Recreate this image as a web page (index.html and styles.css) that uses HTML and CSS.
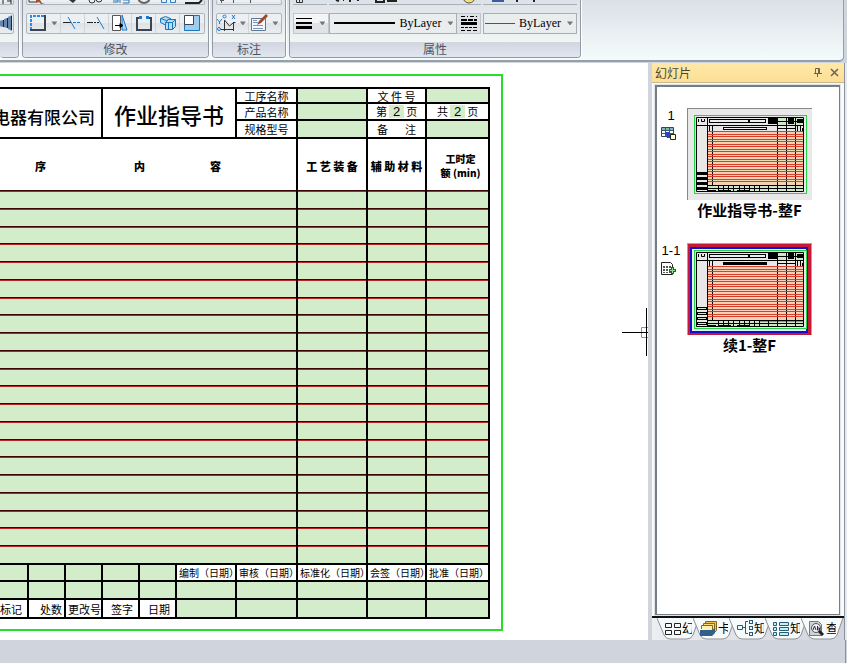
FILE: index.html
```html
<!DOCTYPE html>
<html lang="zh-CN">
<head>
<meta charset="utf-8">
<title>作业指导书</title>
<link rel="stylesheet" href="styles.css">
</head>
<body>
<div class="app">
  <header class="ribbon">
    <section class="group group-cut">
      <div class="tools tools-top"><svg width="15" height="5"><path d="M5 0v4M9 1h4M13 0v4" stroke="#222" fill="none"/></svg></div>
      <div class="tools"><button class="tool" aria-label="镜像"><svg width="13" height="16"><path d="M13 0v16L9 14V2zM8 3v10L5 12V4zM4 5v7l-4-1V6z" fill="#6886ae"/><path d="M12.500 1v14M8.500 3v10M4.500 5v7" stroke="#223" fill="none"/></svg></button></div>
      <div class="caption"></div>
    </section>
    <section class="group group-modify">
      <div class="tools tools-top"><svg width="178" height="5"><path d="M2 0v2h7" stroke="#333" fill="none"/><path d="M9 0h4l2 3h3l-4 1-2-2-3 1z" fill="#a0522d"/><path d="M42 0h7l-3 3z" fill="#333"/><circle cx="65" cy="0" r="3" fill="none" stroke="#333"/><circle cx="72" cy="-1" r="3" fill="none" stroke="#333"/><path d="M86 0h5v2h-5M93 0v3M96 0h6v3h-6" stroke="#2876b8" fill="none"/><circle cx="117" cy="-3" r="6" fill="none" stroke="#666" stroke-width="2"/><path d="M134.500 -1v3.500h5v-4M143.500 -1v3.500h5v-4" stroke="#2d7fc4" fill="none"/><path d="M158 3h14l3-3" stroke="#222" fill="none" stroke-width="2"/></svg></div>
      <div class="tools">
        <button class="tool tool-first" aria-label="拉伸"><svg width="18" height="18"><path d="M2 16V2h14" fill="none" stroke="#2f8bdb" stroke-width="2" stroke-dasharray="3 1"/><path d="M1 16h15V1" fill="none" stroke="#3b4450" stroke-width="2"/></svg></button>
        <button class="drop" aria-label="更多"></button>
        <button class="tool" aria-label="修剪"><svg width="18" height="18"><path d="M0 8.500h8" stroke="#222"/><path d="M5 3l7 12" stroke="#1c79cf"/><path d="M10 8.500h8" stroke="#1c79cf" stroke-dasharray="3 1"/></svg></button>
        <button class="tool" aria-label="延伸"><svg width="18" height="18"><path d="M0 8.500h6M7 8.500h2M10 8.500h2" stroke="#222"/><path d="M10 3l7 12" stroke="#1c79cf"/></svg></button>
        <button class="tool" aria-label="比例"><svg width="18" height="18"><path d="M1.500 1.500h8v15h-8z" fill="#fff" stroke="#555"/><path d="M11 1l5 15h-5z" fill="#a9d3f3" stroke="#1c79cf"/><path d="M4 11.500h7M9 9.500l3 2-3 2z" stroke="#000" fill="#000"/></svg></button>
        <button class="tool" aria-label="打断"><svg width="18" height="18"><path d="M4 4H2v12h14V4h-2" fill="none" stroke="#3b4450" stroke-width="2"/><path d="M4 2h3v3H4zM11 2h3v3h-3z" fill="#187bd1"/></svg></button>
        <button class="tool" aria-label="三维"><svg width="18" height="18" fill="#b8ddf6" stroke="#1976ba"><path d="M1.500 4.500l5-2 5 2v5l-4 2-6-3z"/><path d="M1.500 4.500l6 2 4-2" fill="none"/><path d="M6.500 8.500l3-3h7v7l-3 3h-7z"/><path d="M6.500 8.500h7l3-3M13.500 8.500v7M9.500 8.500v7" fill="none"/></svg></button>
        <button class="tool" aria-label="缩放"><svg width="18" height="18"><path d="M1.500 16.500h15v-15h-6v9h-9z" fill="#9fcdf0" stroke="#1976ba"/><path d="M1.500 1.500h9v9h-9z" fill="#fff" stroke="#3b4450"/></svg></button>
      </div>
      <div class="caption">修改</div>
    </section>
    <section class="group group-mark">
      <div class="tools tools-top"><svg width="64" height="5"><path d="M4.500 0v3M16.500 0v3M3 .5h4M33.500 0v3" stroke="#555" fill="none"/></svg></div>
      <div class="tools">
        <button class="tool tool-first" aria-label="坐标标注"><svg width="20" height="18"><path d="M4 15.500h13M7.500 17V6l5 6 4-3.500h2M16.500 8v9" fill="none" stroke="#333"/><path d="M0 5l2.500 3L5 5M2.500 8v2M15 1l3 4M18 1l-3 4" stroke="#1c79cf" fill="none"/><circle cx="7.500" cy="2.500" r="1.500" fill="none" stroke="#1c79cf"/><circle cx="2" cy="15" r="1.500" fill="none" stroke="#1c79cf"/></svg></button>
        <button class="drop" aria-label="更多标注"></button>
        <button class="tool tool-first" aria-label="编辑标注"><svg width="18" height="18"><path d="M1.500 4.500h14v12h-14z" fill="#f4f8fc" stroke="#66758a"/><path d="M3 8.500h5M3 11.500h10M3 14.500h10M3 6.500h4" stroke="#6f96c4"/><path d="M16 0l2 2-7 7-4 2 2-4z" fill="#9c492a"/></svg></button>
        <button class="drop" aria-label="更多编辑"></button>
      </div>
      <div class="caption">标注</div>
    </section>
    <section class="group group-props">
      <div class="props props-top"><svg width="284" height="5"><path d="M3.500 0v2.500h6V0M6.500 0v2" fill="none" stroke="#333"/><path d="M0 4.500h34M36 4.500h152" fill="none" stroke="#a7aeb5"/><path d="M43 0l3 1M50 0h1M57 0v2M64 0h2M83 0v2h8V0M94 1h10" fill="none" stroke="#222" stroke-width="2"/><circle cx="176" cy="-3" r="6" fill="#ede27c" stroke="#555"/><path d="M199 0h12v2h-12z" fill="#3b5ca5"/><path d="M224 0v2M241 0v2" stroke="#222" stroke-width="2"/><path d="M190 4.500h94" stroke="#a7aeb5"/></svg></div>
      <div class="props">
        <button class="weight" aria-label="线宽"><svg width="16" height="12"><path d="M0 1.500h16" stroke="#000"/><path d="M0 6h16" stroke="#000" stroke-width="2"/><path d="M0 10.500h16" stroke="#000" stroke-width="3"/></svg><i class="arrow"></i></button>
        <div class="combo combo-line"><i class="swatch"></i><select aria-label="线宽值"><option>ByLayer</option></select><i class="arrow"></i></div>
        <button class="linetype" aria-label="线型"><svg width="16" height="16"><path d="M0 1.500h4M6 1.500h1M9 1.500h4M15 1.500h1M0 12.500h3M4 12.500h3M8 12.500h3M12 12.500h4M0 15.500h4M6 15.500h4M12 15.500h4" stroke="#000"/><path d="M0 5h6M7 5h5M13 5h3" stroke="#000" stroke-width="2"/><path d="M0 8.500h16" stroke="#000" stroke-width="3"/></svg></button>
        <div class="combo combo-color"><i class="swatch swatch-red"></i><select aria-label="颜色"><option>ByLayer</option></select><i class="arrow"></i></div>
      </div>
      <div class="caption">属性</div>
    </section>
  </header>

  <main class="work">
    <section class="canvas">
      <div class="sheet">
        <table class="form">
          <colgroup><col class="c-a"><col class="c-b"><col class="c-b"><col class="c-b"><col class="c-b"><col class="c-g"><col class="c-h"><col class="c-e"><col class="c-c"><col class="c-f"></colgroup>
          <tbody class="head">
            <tr class="h-first"><td colspan="3" rowspan="3" class="company"><div>电器有限公司</div></td><td colspan="3" rowspan="3" class="doc-title">作业指导书</td><td>工序名称</td><td class="fill"></td><td>文 件 号</td><td class="fill"></td></tr>
            <tr class="h-17"><td>产品名称</td><td class="fill"></td><td><div class="page">第<b>2</b>页</div></td><td><div class="page">共<b>2</b>页</div></td></tr>
            <tr class="h-18"><td>规格型号</td><td class="fill"></td><td><div class="note"><span>备</span><span>注</span></div></td><td class="fill"></td></tr>
          </tbody>
          <tbody class="titles">
            <tr><th colspan="7"><div class="step"><span>序</span><span>内</span><span>容</span></div></th><th>工 艺 装 备</th><th>辅 助 材 料</th><th class="quota">工时定<br>额 (min)</th></tr>
          </tbody>
          <tbody class="lines" id="lines"></tbody>
          <tbody class="sign">
            <tr class="h-17"><td class="fill"></td><td class="fill"></td><td class="fill"></td><td class="fill"></td><td class="fill"></td><td>编制（日期）</td><td>审核（日期）</td><td>标准化（日期）</td><td>会签（日期）</td><td>批准（日期）</td></tr>
            <tr class="h-18 fill-row"><td></td><td></td><td></td><td></td><td></td><td></td><td></td><td></td><td></td><td></td></tr>
            <tr class="h-19 revise"><td>标记</td><td>处数</td><td>更改号</td><td>签字</td><td>日期</td><td class="fill"></td><td class="fill"></td><td class="fill"></td><td class="fill"></td><td class="fill"></td></tr>
          </tbody>
        </table>
      </div>
      <svg class="cursor" width="26" height="48"><path d="M26 19.500h-6.500v10H26" fill="none" stroke="#2fc48c"/><path d="M0 24.500h26M24.500 0v48" stroke="#000"/></svg>
    </section>

    <aside class="pane">
      <div class="pane-title"><h2>幻灯片</h2>
        <button aria-label="固定"><svg width="8" height="9"><path d="M1.500 5V.5h4V5M0 5.500h8M3.500 6v3M4.500 1v4" fill="none" stroke="#6b6450"/></svg></button>
        <button aria-label="关闭"><svg width="9" height="9"><path d="M1 1l7 7M8 1L1 8" stroke="#6b6450" stroke-width="1.500"/></svg></button>
      </div>
      <div class="slides">
        <figure class="slide">
          <div class="slide-key"><span>1</span><svg width="16" height="14"><path d="M.5.5h12v9H.5z" fill="#fff" stroke="#345"/><path d="M1 1h11v2H1z" fill="#7eb5be"/><path d="M0 3.500h12M0 6.500h12M4.500 0v9M8.500 0v9" stroke="#456"/><path d="M4 5h4l2 3v3H6z" fill="#2444c4"/><path d="M9.500 7.500h5v5h-5z" fill="#ffffd4" stroke="#222"/></svg></div>
          <svg class="thumb" width="125" height="92" id="thumb1"></svg>
          <figcaption>作业指导书-整F</figcaption>
        </figure>
        <figure class="slide">
          <div class="slide-key"><span>1-1</span><svg width="16" height="14"><path d="M.5.5h9l2 2v10H.5z" fill="#fff" stroke="#222"/><path d="M2 4h8v7H2z" fill="#555"/><path d="M4.500 4v7M7.500 4v7M2 6.500h8M2 9.500h8" stroke="#fff"/><path d="M8 8.500h7M11.500 5v7" stroke="#164" stroke-width="3"/><path d="M9 8.500h5M11.500 6v5" stroke="#8fe08c"/></svg></div>
          <svg class="thumb" width="125" height="92" id="thumb2"></svg>
          <figcaption>续1-整F</figcaption>
        </figure>
      </div>
      <nav class="tabs">
        <button><svg class="shape" width="43" height="22"><path d="M0 0l7 17q2 4 6 4h17q4 0 6-4l6-17"/></svg><svg width="17" height="13"><path d="M1.500 1.500h6v4h-6zM10.500 1.500h6v4h-6zM1.500 8.500h6v4h-6zM10.500 8.500h6v4h-6z" fill="none" stroke="#222"/></svg><span>幻</span></button>
        <button><svg class="shape" width="43" height="22"><path d="M0 0l7 17q2 4 6 4h17q4 0 6-4l6-17"/></svg><svg width="17" height="15"><path d="M5.500 5V.5h11v9l-3 3" fill="#f0c34c" stroke="#8a6515"/><path d="M3.500 7V2.500h11v8" fill="#f9dc7d" stroke="#8a6515"/><path d="M1.500 8V4.500h11v5" fill="#fff0b2" stroke="#8a6515"/><path d="M0 9h12l3-2v5l-3 3H0z" fill="#31618b"/></svg><span>卡</span></button>
        <button><svg class="shape" width="43" height="22"><path d="M0 0l7 17q2 4 6 4h17q4 0 6-4l6-17"/></svg><svg width="17" height="16" fill="#e7fbff" stroke="#255c78"><path d="M1.500 5.500h5v4h-5z"/><path d="M12 1.500H9.500v12H12M7 7.500h2" fill="none"/><rect x="13.500" y="0.500" width="3" height="3"/><rect x="13.500" y="6.500" width="3" height="3"/><rect x="13.500" y="12.500" width="3" height="3"/></svg><span>知</span></button>
        <button><svg class="shape" width="43" height="22"><path d="M0 0l7 17q2 4 6 4h17q4 0 6-4l6-17"/></svg><svg width="17" height="15" fill="#c1f0f4" stroke="#255c78"><path d="M1.500 1.500h3v3h-3zM1.500 6.500h3v3h-3zM1.500 11.500h3v3h-3zM7.500 1.500h9v3h-9zM7.500 6.500h9v3h-9zM7.500 11.500h9v3h-9z"/></svg><span>知</span></button>
        <button><svg class="shape" width="43" height="22"><path d="M0 0l7 17q2 4 6 4h17q4 0 6-4l6-17"/></svg><svg width="17" height="16"><path d="M1.500 1.500h9l3 3v11h-12z" fill="#d0d3d6" stroke="#777"/><circle cx="8" cy="8" r="4.500" fill="#eef" stroke="#555"/><path d="M11 11l4 4" stroke="#222" stroke-width="3"/><path d="M5 10l1.500-4L8 10M9.500 6v4h2V8h-2" fill="none" stroke="#333"/></svg><span>查</span></button>
      </nav>
    </aside>
    <div class="edge"></div>
  </main>
  <footer class="base"></footer>
</div>
<script src="app.js"></script>
</body>
</html>
```
FILE: styles.css
```css
* { box-sizing: border-box; }
body { margin: 0; background: #d0d4dd; color: #000; font: 12px/16px "Noto Sans CJK SC", "Liberation Sans", sans-serif; }
button { border: 0; padding: 0; background: none; font: inherit; color: inherit; display: flex; align-items: center; justify-content: center; }
svg { display: block; flex: none; }
.app { min-height: 100vh; display: flex; flex-direction: column; overflow: hidden; }

.ribbon { display: flex; gap: 3px; height: 62px; margin-right: 3px; padding-bottom: 2px; background: linear-gradient(#dcdfe7, #eaf0f3 60%, #f2fcfb); border: solid #989fa7; border-width: 0 1px 2px 0; border-bottom-right-radius: 5px; }
.group { display: flex; flex-direction: column; gap: 8px; border: 1px solid #9299a3; border-top: 0; border-radius: 0 0 4px 4px; background: linear-gradient(#dde2e8, #f0f4f4 70%); box-shadow: 1px 0 #fff; overflow: hidden; }
.group-cut { width: 19px; border-left: 0; }
.group-modify { width: 187px; }
.group-mark { width: 74px; }
.group-props { width: 292px; }
.tools { display: flex; height: 22px; margin: 0 3px; border: 1px solid #adb4bb; border-radius: 2px; background: linear-gradient(#edf0f2 50%, #dfe3e7 50%, #eaeef0); }
.group-cut .tools { margin: 0 4px 0 -3px; }
.tools.tools-top { height: 5px; border-top: 0; }
.tool { width: 24px; border-right: 1px solid #d0d5da; }
.tool:last-child { border: 0; }
.tool-first { width: 22px; border: 0; }
.drop { width: 12px; border-right: 1px solid #d0d5da; }
.drop:last-child { border: 0; }
.drop::before, .arrow { content: ""; flex: none; width: 6px; height: 4px; background: #777; clip-path: polygon(0 0, 100% 0, 50% 100%); }
.caption { margin-top: auto; height: 16px; background: linear-gradient(#d0d5e0, #e2e6ef); color: #4c5564; text-align: center; line-height: 14px; }
.props { display: flex; height: 22px; margin: 0 3px; }
.props.props-top { height: 5px; }
.weight { width: 36px; gap: 7px; border: 1px solid #c0c5ca; background: linear-gradient(#f3f5f6 50%, #dfe3e7 50%); }
.combo { display: flex; align-items: center; border: 1px solid #a7aeb5; background: #e9edee; padding-right: 3px; }
.combo-line { width: 129px; }
.combo-color { width: 94px; margin-left: 2px; }
.linetype { width: 24px; border: 1px solid #c0c5ca; border-left: 0; background: #dfe3e7; }
.swatch { flex: 1; height: 2px; margin: 0 4px; background: #000; }
.swatch-red { height: 1px; margin: 0 4px 0 1px; background: #e01818; }
select { appearance: none; width: 44px; margin-right: 4px; border: 0; padding: 0; background: none; color: #000; font: 12px/18px "Liberation Serif", serif; }

.work { flex: 1; display: flex; margin-top: 1px; }
.canvas { flex: 1; min-width: 0; position: relative; background: #fff; padding-top: 11px; }
.sheet { width: 503px; height: 557px; padding: 11px 11px 0 0; border: 2px solid #2bdc2b; border-left: 0; }
.form { width: 490px; table-layout: fixed; border-spacing: 0; border-top: 2px solid #000; font-size: 11px; line-height: 12px; }
.c-a { width: 29px; }
.c-b { width: 37px; }
.c-c { width: 59px; }
.c-e { width: 70px; }
.c-f { width: 63px; }
.c-g { width: 60px; }
.c-h { width: 61px; }
.form td, .form th { padding: 0; border: solid #000; border-width: 0 2px 2px 0; text-align: center; vertical-align: middle; white-space: nowrap; }
.form .fill, .fill-row td { background: #d3edcb; }
.h-first { height: 15px; }
.h-17 { height: 17px; }
.h-18 { height: 18px; }
.h-19 { height: 19px; }
.company div { display: flex; justify-content: flex-end; padding: 8px 6px 0 0; font-size: 17px; line-height: 20px; font-weight: 500; }
.form .doc-title { padding-top: 2px; font-size: 22px; line-height: 26px; font-weight: 500; }
.page { display: flex; justify-content: center; gap: 2px; }
.page b { padding: 0 4px; background: #d3edcb; font: 13px/13px "Liberation Sans", sans-serif; }
.note { display: flex; justify-content: center; gap: 17px; }
.titles tr { height: 53px; }
.form .titles th { border-bottom: 0; background: linear-gradient(#3c0404 50%, #b82424 50%) bottom / 100% 2px no-repeat; font-weight: 900; }
.form .titles .quota { line-height: 14px; font-size: 10px; padding-left: 6px; }
.step { display: flex; padding-left: 35px; }
.step span:nth-child(2) { margin: 0 65px 0 88px; }
.lines tr { height: 18px; }
.lines tr:nth-child(4n+3) { height: 17px; }
.form .lines td { border-bottom: 0; background: linear-gradient(#3c0404 50%, #b82424 50%) bottom / 100% 2px no-repeat #d3edcb; }
.form .lines tr:last-child td { border-bottom: 2px solid #000; background: #d3edcb; }
.form .sign td { font-size: 10px; text-align: left; padding-left: 2px; }
.form .sign .revise td { font-size: 11px; text-align: right; padding: 0 5px 0 0; }
.form .sign .revise td:nth-child(3) { padding: 0; }
.form .sign .revise td:nth-child(2) { padding-right: 2px; }
.cursor { position: absolute; right: 0; top: 245px; }

.pane { width: 196px; display: flex; flex-direction: column; border-left: 4px solid #d0d4dd; background: #fafbfc; }
.pane-title { display: flex; align-items: center; gap: 8px; height: 20px; padding: 0 5px 0 3px; background: linear-gradient(#ffe8a8, #fddf95); border: solid #c5b98f; border-width: 0 0 1px; }
.pane-title h2 { flex: 1; margin: 0; font-size: 12px; font-weight: 400; line-height: 16px; color: #4b4534; }
.slides { flex: 1; margin: 2px 4px 1px 3px; padding: 21px 26px 0 4px; border: solid #777d84; border-width: 2px 1px 1px 2px; background: #fff; box-shadow: 0 0 0 1px #dfe2e6; }
.slide { display: grid; grid-template-columns: 20px 125px; column-gap: 6px; margin: 0 0 24px; }
.slide-key { display: flex; flex-direction: column; align-items: center; gap: 4px; font: 13px/15px "Liberation Sans", sans-serif; white-space: nowrap; }
.slide-key svg { align-self: flex-start; }
.slide figcaption { grid-column: 2; font-size: 15px; line-height: 19px; font-weight: 700; text-align: center; white-space: nowrap; }
.tabs { display: flex; height: 24px; padding-left: 5px; border-top: 2px solid #111; background: linear-gradient(90deg, #eceef1, #d0d4dd); }
.tabs button { position: relative; width: 43px; height: 20px; margin-right: -7px; justify-content: flex-start; gap: 1px; padding-left: 7px; }
.tabs svg { position: relative; }
.tabs .shape { position: absolute; left: 0; top: 0; fill: #f7fafa; stroke: #8b9096; }
.tabs span { position: relative; width: 10px; overflow: hidden; white-space: nowrap; }
.edge { width: 3px; border-left: 1px solid #8c929b; background: #e6e9ee; }
.base { height: 23px; margin-right: 1px; border-right: 1px solid #8c929b; background: #d0d4dd; }
```
FILE: app.js
```js
// Blank step rows of the form.
document.getElementById("lines").innerHTML =
  '<tr><td colspan="7"></td><td></td><td></td><td></td></tr>'.repeat(21);

// Miniature of one sheet; a selected slide gets the coloured frame.
function drawThumb(id, selected) {
  var s = "";
  function box(x, y, w, h, fill, stroke) {
    s += '<rect x="' + x + '" y="' + y + '" width="' + w + '" height="' + h +
      '" fill="' + fill + '"' + (stroke ? ' stroke="' + stroke + '"' : "") + "/>";
  }
  function path(d, stroke) {
    s += '<path d="' + d + '" fill="none" stroke="' + stroke + '"/>';
  }
  if (selected) {
    box(0, 0, 125, 92, "#a9a0a8");
    box(1, 1, 123, 91, "#c81838");
    box(3, 4, 118, 86, "#1010c8");
    box(5, 6, 114, 82, "#e4f4f8");
  } else {
    box(0, 0, 125, 92, "#e8e8e8");
    path("M0 .5h125M.5 0v92", "#888");
  }
  box(7.5, 7.5, 112, 78, "#e8e8e8", "#22d444");
  box(20, 23, 97, 54, "#f8ceb4");
  var d = "";
  for (var i = 0; i < 21; i++) {
    var y = 23 + Math.round(i * 2.5);
    if (i % 4 === 3) box(20, y, 97, 3, "#e9e0b0");
    d += "M20 " + (y + 0.5) + "h97";
  }
  path("M25.500 17v60M90.500 23v54M99.500 23v54M108.500 23v54", "#000");
  path(d, "#d4402c");
  box(20, 77, 97, 7, "#cfe6c8");
  box(90, 10, 27, 7, "#cfe6c8");
  if (selected) box(73, 77, 44, 2, "#45c945");
  path("M9.500 9.500h107v74h-107zM20.500 9v75M9 17.500h108M90.500 10v13M99.500 10v13M108.500 10v13M20 77.500h97M20 80.500h97M31.500 77v6M36.500 77v6M41.500 77v6M46.500 77v6M52.500 77v6M57.500 77v6M62.500 77v6M67.500 77v6M72.500 77v6M81.500 77v6M90.500 77v6M99.500 77v6M108.500 77v6", "#000");
  path("M22.500 17v6M90 13.500h27M90 20.500h18M11.500 11v3M14.500 11v2.500h3V11M110.500 18v5M113.500 18v5M115.500 20v3", "#000");
  box(22.5, 11.5, 39, 3, "#eee", "#000");
  box(62.5, 11.5, 16, 3, "#eee", "#000");
  box(36.5, 19.5, 43, 2, selected ? "#000" : "#eee", "#000");
  box(81, 10, 9, 6, "#000");
  box(101, 10, 6, 6, "#000");
  box(110, 11, 6, 4, "#000");
  [64, 69, 74, 79].forEach(function (y) {
    box(10.5, y + 0.5, 9, 2, selected ? "#cfe6c8" : "#000", "#000");
  });
  path("M21 82.500h8M32 82.500h12M50 82.500h12", "#000");
  document.getElementById(id).innerHTML = s;
}
drawThumb("thumb1", false);
drawThumb("thumb2", true);
```
